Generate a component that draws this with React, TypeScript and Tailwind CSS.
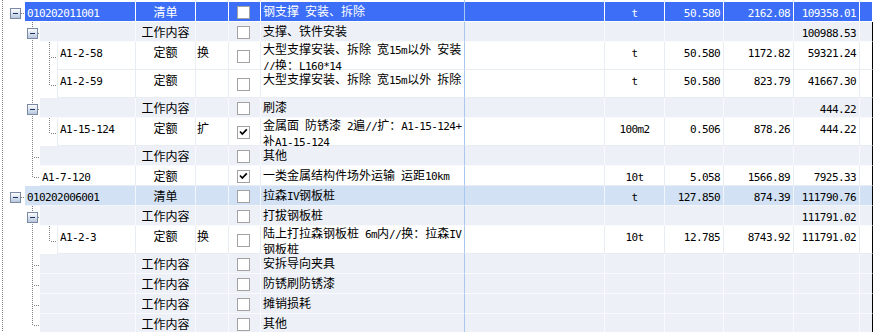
import React from 'react';

type Item = {
  level: 0 | 1 | 2;
  kind: '清单' | '工作内容' | '定额';
  code?: string;
  flag?: string;
  checked?: boolean;
  name: string[];
  unit?: string;
  qty?: string;
  price?: string;
  total?: string;
  box?: boolean; // has an expand box
  last?: boolean; // last sibling, connector stops at the middle
  tall?: boolean;
  selected?: boolean;
};

const rows: Item[] = [
  { level: 0, kind: '清单', code: '010202011001', name: ['钢支撑 安装、拆除'], unit: 't', qty: '50.580', price: '2162.08', total: '109358.01', box: true, selected: true },
  { level: 1, kind: '工作内容', name: ['支撑、铁件安装'], total: '100988.53', box: true },
  { level: 2, kind: '定额', code: 'A1-2-58', flag: '换', name: ['大型支撑安装、拆除 宽15m以外 安装', '//换：L160*14'], unit: 't', qty: '50.580', price: '1172.82', total: '59321.24', tall: true },
  { level: 2, kind: '定额', code: 'A1-2-59', name: ['大型支撑安装、拆除 宽15m以外 拆除'], unit: 't', qty: '50.580', price: '823.79', total: '41667.30', tall: true, last: true },
  { level: 1, kind: '工作内容', name: ['刷漆'], total: '444.22', box: true },
  { level: 2, kind: '定额', code: 'A1-15-124', flag: '扩', checked: true, name: ['金属面 防锈漆 2遍//扩：A1-15-124+', '补A1-15-124'], unit: '100m2', qty: '0.506', price: '878.26', total: '444.22', tall: true, last: true },
  { level: 1, kind: '工作内容', name: ['其他'] },
  { level: 1, kind: '定额', code: 'A1-7-120', checked: true, name: ['一类金属结构件场外运输 运距10km'], unit: '10t', qty: '5.058', price: '1566.89', total: '7925.33', last: true },
  { level: 0, kind: '清单', code: '010202006001', name: ['拉森IV钢板桩'], unit: 't', qty: '127.850', price: '874.39', total: '111790.76', box: true },
  { level: 1, kind: '工作内容', name: ['打拔钢板桩'], total: '111791.02', box: true },
  { level: 2, kind: '定额', code: 'A1-2-3', flag: '换', name: ['陆上打拉森钢板桩 6m内//换：拉森IV', '钢板桩'], unit: '10t', qty: '12.785', price: '8743.92', total: '111791.02', tall: true, last: true },
  { level: 1, kind: '工作内容', name: ['安拆导向夹具'] },
  { level: 1, kind: '工作内容', name: ['防锈刷防锈漆'] },
  { level: 1, kind: '工作内容', name: ['摊销损耗'] },
  { level: 1, kind: '工作内容', name: ['其他'], last: true },
];

const gutterW = [25, 40, 57];
const codeW = ['w-[111px]', 'w-[96px]', 'w-[79px]'];

// ascii runs get the narrow mono face, the rest stays in the CJK font
const Txt = ({ s }: { s: string }) => (
  <>
    {(s.match(/[\x00-\x7f]+|[^\x00-\x7f]+/g) || []).map((p, i) =>
      /^[\x00-\x7f]/.test(p) ? (
        <span key={i} className="font-['DejaVu_Sans_Mono','Liberation_Mono',monospace] text-[11px] tracking-[-0.6px] whitespace-pre">
          {p}
        </span>
      ) : (
        <span key={i}>{p}</span>
      )
    )}
  </>
);

const tone = (r: Item) => {
  if (r.selected) return { bg: 'bg-[#3c6ef8] text-white', b: 'border-b-white', r: 'border-r-white' };
  if (r.kind === '清单') return { bg: 'bg-[#d2e1f3]', b: 'border-b-[#f2f6fb]', r: 'border-r-[#f2f6fb]' };
  if (r.kind === '工作内容') return { bg: 'bg-[#edf1f7]', b: 'border-b-[#f8fafd]', r: 'border-r-[#f8fafd]' };
  return { bg: 'bg-white', b: 'border-b-[#e8edf4]', r: 'border-r-[#e8edf4]' };
};

const dot = { stroke: '#808080', strokeDasharray: '1 1', shapeRendering: 'crispEdges' as const };

const ExpandBox = ({ x, y, id }: { x: number; y: number; id: string }) => (
  <g>
    <defs>
      <linearGradient id={id} x1="0" y1="0" x2="0" y2="1">
        <stop offset="0" stopColor="#ffffff" />
        <stop offset="1" stopColor="#b5c4db" />
      </linearGradient>
    </defs>
    <rect x={x + 0.5} y={y + 0.5} width="10" height="10" fill={`url(#${id})`} stroke="#7a8aa5" shapeRendering="crispEdges" />
    <line x1={x + 3} x2={x + 8} y1={y + 5.5} y2={y + 5.5} stroke="#1d3461" shapeRendering="crispEdges" />
  </g>
);

const Tree = ({ r, h, id }: { r: Item; h: number; id: string }) => {
  const w = gutterW[r.level];
  const mid = h / 2 + 1;
  return (
    <svg width={w} height={h} className="block shrink-0 bg-white">
      <line x1="2.5" y1="0" x2="2.5" y2={h} {...dot} />
      {r.level >= 1 && <line x1="32.5" y1="0" x2="32.5" y2={r.level === 1 && r.last ? mid + 1 : h} {...dot} />}
      {r.level === 0 && (
        <>
          <line x1="21" x2="25" y1={mid + 0.5} y2={mid + 0.5} {...dot} />
          <ExpandBox x={10} y={mid - 5} id={id} />
        </>
      )}
      {r.level === 1 && r.box && (
        <>
          <line x1="38" x2="40" y1={mid + 0.5} y2={mid + 0.5} {...dot} />
          <ExpandBox x={27} y={mid - 5} id={id} />
        </>
      )}
      {r.level === 1 && !r.box && <line x1="34" x2="40" y1={mid + 0.5} y2={mid + 0.5} {...dot} />}
      {r.level === 2 && (
        <>
          <line x1="49.5" y1="0" x2="49.5" y2={r.last ? mid + 1 : h} {...dot} />
          <line x1="51" x2="57" y1={mid + 0.5} y2={mid + 0.5} {...dot} />
        </>
      )}
    </svg>
  );
};

const Check = ({ on }: { on?: boolean }) => (
  <svg width="13" height="13" viewBox="0 0 13 13" className="block">
    <rect x="0.5" y="0.5" width="12" height="12" fill="#fff" stroke="#a2a2a2" shapeRendering="crispEdges" />
    {on && <path d="M3 5.5 L5.3 8 L9.8 3.3" fill="none" stroke="#000" strokeWidth="1.7" />}
  </svg>
);

const GridRow = ({ r, i }: { r: Item; i: number }) => {
  const h = r.tall ? 28 : 20;
  const t = tone(r);
  const base = `shrink-0 border-b border-r ${t.bg} ${t.b}`;
  const cell = `${base} ${t.r}`;
  return (
    <div className={`flex ${r.tall ? 'h-[28px]' : 'h-[20px]'}`}>
      <Tree r={r} h={h} id={`gb${i}`} />
      <div className={`${cell} ${codeW[r.level]} ${r.level === 2 ? 'border-l border-l-[#e8edf4]' : ''} pl-[2px] pt-[4px] whitespace-nowrap`}>
        {r.code && <Txt s={r.code} />}
      </div>
      <div className={`${cell} w-[60px] text-center pt-[4px]`}>{r.kind}</div>
      <div className={`${cell} w-[33px] pl-[1px] pt-[4px]`}>{r.flag}</div>
      <div className={`${cell} w-[32px] flex items-center pl-[8px] pt-[2px]`}>
        <Check on={r.checked} />
      </div>
      <div
        className={`${base} border-r-[#a8c8ef] w-[204px] pl-[2px] whitespace-nowrap ${
          r.name.length > 1 ? 'pt-0 leading-[14px]' : 'pt-[2px] leading-[13px]'
        }`}
      >
        {r.name.map((line, k) => (
          <div key={k}>
            <Txt s={line} />
          </div>
        ))}
      </div>
      <div className={`${cell} w-[140px]`} />
      <div className={`${cell} w-[60px] text-center pt-[4px]`}>{r.unit && <Txt s={r.unit} />}</div>
      <div className={`${cell} w-[59px] text-right pr-[3px] pt-[4px]`}>{r.qty && <Txt s={r.qty} />}</div>
      <div className={`${cell} w-[70px] text-right pr-[3px] pt-[4px]`}>{r.price && <Txt s={r.price} />}</div>
      <div className={`${cell} w-[66px] text-right pr-[3px] pt-[4px]`}>{r.total && <Txt s={r.total} />}</div>
      <div className={`${base} flex-1`} />
    </div>
  );
};

const Stub = () => (
  <div className="flex h-[2px]">
    <svg width={25} height={2} className="block shrink-0 bg-white">
      <line x1="2.5" y1="0" x2="2.5" y2="2" {...dot} />
    </svg>
    <div className="shrink-0 w-[111px] border-r border-r-[#e8edf4] bg-white" />
    <div className="shrink-0 w-[60px] border-r border-r-[#e8edf4] bg-white" />
    <div className="shrink-0 w-[33px] border-r border-r-[#e8edf4] bg-white" />
    <div className="shrink-0 w-[32px] border-r border-r-[#e8edf4] bg-white" />
    <div className="shrink-0 w-[204px] border-r border-r-[#a8c8ef] bg-white" />
    <div className="shrink-0 w-[140px] border-r border-r-[#e8edf4] bg-white" />
    <div className="shrink-0 w-[60px] border-r border-r-[#e8edf4] bg-white" />
    <div className="shrink-0 w-[59px] border-r border-r-[#e8edf4] bg-white" />
    <div className="shrink-0 w-[70px] border-r border-r-[#e8edf4] bg-white" />
    <div className="shrink-0 w-[66px] border-r border-r-[#e8edf4] bg-white" />
    <div className="flex-1 bg-white" />
  </div>
);

export default function App() {
  return (
    <div className="w-[873px] h-[332px] overflow-hidden bg-white text-black font-['Noto_Sans_CJK_SC',sans-serif] text-[12px] leading-[12px]">
      <Stub />
      {rows.map((r, i) => (
        <GridRow key={i} r={r} i={i} />
      ))}
    </div>
  );
}
